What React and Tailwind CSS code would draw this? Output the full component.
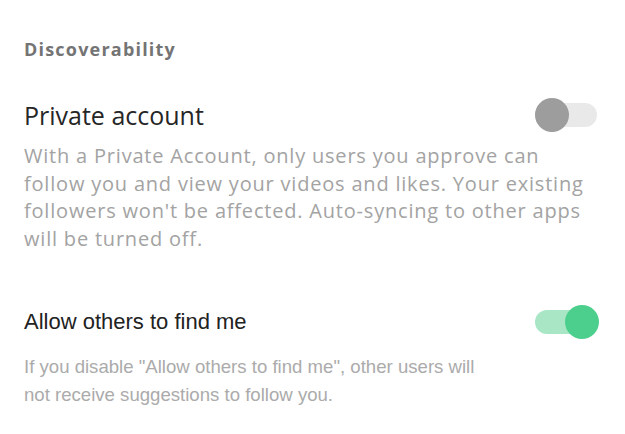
export default function App() {
  return (
    <div className="min-h-screen w-[625px] h-[434px] overflow-hidden bg-white font-['Open_Sans',sans-serif]">
      <div className="pl-[24px] pr-[28px] pt-[38px]">
        <div className="text-[18px] font-bold tracking-[1.2px] text-[#747474] leading-[22px]">Discoverability</div>

        <div className="mt-[40px] flex items-center justify-between">
          <div className="text-[25px] text-[#262626] leading-[30px]">Private account</div>
          <div className="relative w-[62px] h-[24px] rounded-full bg-[#e9e9e9]">
            <div className="absolute left-0 top-[-5px] w-[34px] h-[34px] rounded-full bg-[#9d9d9d]" />
          </div>
        </div>
        <p className="mt-[12px] text-[20px] tracking-[0.8px] leading-[27.5px] text-[#a3a3a3] whitespace-nowrap">
          With a Private Account, only users you approve can<br />
          follow you and view your videos and likes. Your existing<br />
          followers won't be affected. Auto-syncing to other apps<br />
          will be turned off.
        </p>

        <div className="mt-[55px] flex items-center justify-between font-['Liberation_Sans',sans-serif]">
          <div className="text-[22px] text-[#222222] leading-[30px]">Allow others to find me</div>
          <div className="relative w-[62px] h-[24px] rounded-full bg-[#a8e6c6]">
            <div className="absolute right-[-2px] top-[-5px] w-[34px] h-[34px] rounded-full bg-[#4ccf8c]" />
          </div>
        </div>
        <p className="mt-[16px] text-[18.6px] leading-[27.5px] text-[#ababab] whitespace-nowrap font-['Liberation_Sans',sans-serif]">
          If you disable "Allow others to find me", other users will<br />
          not receive suggestions to follow you.
        </p>
      </div>
    </div>
  )
}
